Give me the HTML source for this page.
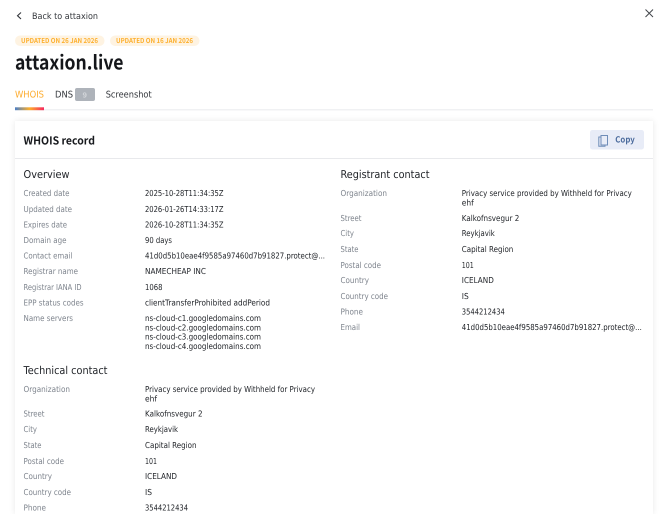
<!DOCTYPE html>
<html><head><meta charset="utf-8"><style>
html,body{margin:0;padding:0;background:#fff;width:670px;height:514px;overflow:hidden}
svg{display:block;font-family:"DejaVu Sans","Liberation Sans",sans-serif;text-rendering:geometricPrecision}
.l{font-size:8.200px;fill:#7f858e}
.v{font-size:8.200px;fill:#23262b}
.h{font-size:10.800px;fill:#1d2025}
.b{font-family:"Noto Sans CJK JP","Liberation Sans",sans-serif;font-weight:700}
</style></head><body>
<svg width="670" height="514" viewBox="0 0 670 514" xmlns="http://www.w3.org/2000/svg">
<defs>
<linearGradient id="g" x1="0" x2="1" y1="0" y2="0"><stop offset="0" stop-color="#4a7fc8"/><stop offset=".5" stop-color="#fdae2a"/><stop offset="1" stop-color="#f5285f"/></linearGradient>
<filter id="s" x="-5%" y="-5%" width="110%" height="110%"><feDropShadow dx="0" dy="0" stdDeviation="3" flood-color="#000" flood-opacity=".09"/></filter>
</defs>
<path d="M21 12.500l-3.500 3.200 3.500 3.300" fill="none" stroke="#33363b" stroke-width="1.100"/>
<text x="32" y="18.800" font-size="8.800" fill="#33363b" textLength="66" lengthAdjust="spacingAndGlyphs">Back to attaxion</text>
<path d="M645.500 9.500l7.500 7.500M653 9.500l-7.500 7.500" stroke="#44474c" stroke-width="1" fill="none"/>
<rect x="15" y="35.500" width="89.500" height="10.500" rx="5.250" fill="#fef3e2"/>
<rect x="110" y="35.500" width="89.500" height="10.500" rx="5.250" fill="#fef3e2"/>
<text class="b" x="21" y="43.200" font-size="6.800" fill="#fdb02e" textLength="77" lengthAdjust="spacingAndGlyphs">UPDATED ON 26 JAN 2026</text>
<text class="b" x="116" y="43.200" font-size="6.800" fill="#fdb02e" textLength="77" lengthAdjust="spacingAndGlyphs">UPDATED ON 16 JAN 2026</text>
<text class="b" x="15" y="69.500" font-size="19.500" fill="#14161a" textLength="108.500" lengthAdjust="spacingAndGlyphs">attaxion.live</text>
<text x="15" y="97.500" font-size="9.200" fill="#fdab2c" textLength="29" lengthAdjust="spacingAndGlyphs">WHOIS</text>
<text x="55" y="97.500" font-size="9.200" fill="#33363b" textLength="18" lengthAdjust="spacingAndGlyphs">DNS</text>
<rect x="75" y="88" width="20" height="13" rx="2" fill="#aeb3ba"/>
<text class="b" x="82.500" y="97.300" font-size="7" fill="#d4d7db" textLength="4.500" lengthAdjust="spacingAndGlyphs">9</text>
<text x="105.700" y="97.500" font-size="9.200" fill="#33363b" textLength="46" lengthAdjust="spacingAndGlyphs">Screenshot</text>
<rect x="15" y="109" width="638" height="1.500" fill="#f0f1f3"/>
<rect x="15" y="107.300" width="29" height="2.900" fill="url(#g)"/>
<rect x="15" y="121" width="638" height="393" fill="#fff" filter="url(#s)"/>
<rect x="15" y="158" width="638" height="1" fill="#e8e9ec"/>
<text class="b" x="23.500" y="144.500" font-size="11" fill="#17191d" textLength="71.500" lengthAdjust="spacingAndGlyphs">WHOIS record</text>
<rect x="590" y="130" width="54" height="19.500" rx="2.500" fill="#e8ecf7"/>
<path d="M601 135.500h6.500v9.500h-6.500zM601 137h-2.200v9.200h6.200v-1.200" fill="none" stroke="#6f8db8" stroke-width="1"/>
<text class="b" x="615.300" y="142.700" font-size="8.500" fill="#4a6a9c" textLength="19.500" lengthAdjust="spacingAndGlyphs">Copy</text>

<text class="h" x="23.500" y="177.800" textLength="46" lengthAdjust="spacingAndGlyphs">Overview</text>
<text class="l" x="23.500" y="196" textLength="46" lengthAdjust="spacingAndGlyphs">Created date</text>
<text class="l" x="23.500" y="212" textLength="48.500" lengthAdjust="spacingAndGlyphs">Updated date</text>
<text class="l" x="23.500" y="227.500" textLength="43.500" lengthAdjust="spacingAndGlyphs">Expires date</text>
<text class="l" x="23.500" y="243" textLength="43" lengthAdjust="spacingAndGlyphs">Domain age</text>
<text class="l" x="23.500" y="258.500" textLength="49" lengthAdjust="spacingAndGlyphs">Contact email</text>
<text class="l" x="23.500" y="274" textLength="54.500" lengthAdjust="spacingAndGlyphs">Registrar name</text>
<text class="l" x="23.500" y="290" textLength="58" lengthAdjust="spacingAndGlyphs">Registrar IANA ID</text>
<text class="l" x="23.500" y="305.500" textLength="60" lengthAdjust="spacingAndGlyphs">EPP status codes</text>
<text class="l" x="23.500" y="321" textLength="49.500" lengthAdjust="spacingAndGlyphs">Name servers</text>
<text class="v" x="145" y="196" textLength="78.500" lengthAdjust="spacingAndGlyphs">2025-10-28T11:34:35Z</text>
<text class="v" x="145" y="212" textLength="78.500" lengthAdjust="spacingAndGlyphs">2026-01-26T14:33:17Z</text>
<text class="v" x="145" y="227.500" textLength="78.500" lengthAdjust="spacingAndGlyphs">2026-10-28T11:34:35Z</text>
<text class="v" x="145" y="243" textLength="27" lengthAdjust="spacingAndGlyphs">90 days</text>
<text class="v" x="145" y="258.500" textLength="180" lengthAdjust="spacingAndGlyphs">41d0d5b10eae4f9585a97460d7b91827.protect@...</text>
<text class="v" x="145" y="274" textLength="61" lengthAdjust="spacingAndGlyphs">NAMECHEAP INC</text>
<text class="v" x="145" y="290" textLength="17.500" lengthAdjust="spacingAndGlyphs">1068</text>
<text class="v" x="145" y="305.500" textLength="125" lengthAdjust="spacingAndGlyphs">clientTransferProhibited addPeriod</text>
<text class="v" x="145" y="321" textLength="116" lengthAdjust="spacingAndGlyphs">ns-cloud-c1.googledomains.com</text>
<text class="v" x="145" y="330.500" textLength="116" lengthAdjust="spacingAndGlyphs">ns-cloud-c2.googledomains.com</text>
<text class="v" x="145" y="339.700" textLength="116" lengthAdjust="spacingAndGlyphs">ns-cloud-c3.googledomains.com</text>
<text class="v" x="145" y="349" textLength="116" lengthAdjust="spacingAndGlyphs">ns-cloud-c4.googledomains.com</text>

<text class="h" x="340.500" y="177.800" textLength="89" lengthAdjust="spacingAndGlyphs">Registrant contact</text>
<text class="l" x="340.500" y="196" textLength="46.500" lengthAdjust="spacingAndGlyphs">Organization</text>
<text class="l" x="340.500" y="221" textLength="21" lengthAdjust="spacingAndGlyphs">Street</text>
<text class="l" x="340.500" y="236" textLength="13.500" lengthAdjust="spacingAndGlyphs">City</text>
<text class="l" x="340.500" y="252" textLength="18" lengthAdjust="spacingAndGlyphs">State</text>
<text class="l" x="340.500" y="268" textLength="40.500" lengthAdjust="spacingAndGlyphs">Postal code</text>
<text class="l" x="340.500" y="283" textLength="28.500" lengthAdjust="spacingAndGlyphs">Country</text>
<text class="l" x="340.500" y="299" textLength="47.500" lengthAdjust="spacingAndGlyphs">Country code</text>
<text class="l" x="340.500" y="314.500" textLength="22.500" lengthAdjust="spacingAndGlyphs">Phone</text>
<text class="l" x="340.500" y="330" textLength="19.500" lengthAdjust="spacingAndGlyphs">Email</text>
<text class="v" x="461.800" y="196" textLength="170" lengthAdjust="spacingAndGlyphs">Privacy service provided by Withheld for Privacy</text>
<text class="v" x="461.800" y="205.300" textLength="12" lengthAdjust="spacingAndGlyphs">ehf</text>
<text class="v" x="461.800" y="221" textLength="57.500" lengthAdjust="spacingAndGlyphs">Kalkofnsvegur 2</text>
<text class="v" x="461.800" y="236" textLength="33" lengthAdjust="spacingAndGlyphs">Reykjavik</text>
<text class="v" x="461.800" y="252" textLength="51.500" lengthAdjust="spacingAndGlyphs">Capital Region</text>
<text class="v" x="461.800" y="268" textLength="12" lengthAdjust="spacingAndGlyphs">101</text>
<text class="v" x="461.800" y="283" textLength="32" lengthAdjust="spacingAndGlyphs">ICELAND</text>
<text class="v" x="461.800" y="299" textLength="7" lengthAdjust="spacingAndGlyphs">IS</text>
<text class="v" x="461.800" y="314.500" textLength="43" lengthAdjust="spacingAndGlyphs">3544212434</text>
<text class="v" x="461.800" y="330" textLength="180" lengthAdjust="spacingAndGlyphs">41d0d5b10eae4f9585a97460d7b91827.protect@...</text>

<text class="h" x="23.500" y="373.800" textLength="84" lengthAdjust="spacingAndGlyphs">Technical contact</text>
<text class="l" x="23.500" y="392" textLength="46.500" lengthAdjust="spacingAndGlyphs">Organization</text>
<text class="l" x="23.500" y="416.500" textLength="21" lengthAdjust="spacingAndGlyphs">Street</text>
<text class="l" x="23.500" y="432" textLength="13.500" lengthAdjust="spacingAndGlyphs">City</text>
<text class="l" x="23.500" y="448" textLength="18" lengthAdjust="spacingAndGlyphs">State</text>
<text class="l" x="23.500" y="464" textLength="40.500" lengthAdjust="spacingAndGlyphs">Postal code</text>
<text class="l" x="23.500" y="479" textLength="28.500" lengthAdjust="spacingAndGlyphs">Country</text>
<text class="l" x="23.500" y="495" textLength="47.500" lengthAdjust="spacingAndGlyphs">Country code</text>
<text class="l" x="23.500" y="510.500" textLength="22.500" lengthAdjust="spacingAndGlyphs">Phone</text>
<text class="v" x="145" y="392" textLength="170" lengthAdjust="spacingAndGlyphs">Privacy service provided by Withheld for Privacy</text>
<text class="v" x="145" y="401.300" textLength="12" lengthAdjust="spacingAndGlyphs">ehf</text>
<text class="v" x="145" y="416.500" textLength="57.500" lengthAdjust="spacingAndGlyphs">Kalkofnsvegur 2</text>
<text class="v" x="145" y="432" textLength="33" lengthAdjust="spacingAndGlyphs">Reykjavik</text>
<text class="v" x="145" y="448" textLength="51.500" lengthAdjust="spacingAndGlyphs">Capital Region</text>
<text class="v" x="145" y="464" textLength="12" lengthAdjust="spacingAndGlyphs">101</text>
<text class="v" x="145" y="479" textLength="32" lengthAdjust="spacingAndGlyphs">ICELAND</text>
<text class="v" x="145" y="495" textLength="7" lengthAdjust="spacingAndGlyphs">IS</text>
<text class="v" x="145" y="510.500" textLength="43" lengthAdjust="spacingAndGlyphs">3544212434</text>
</svg>
</body></html>
